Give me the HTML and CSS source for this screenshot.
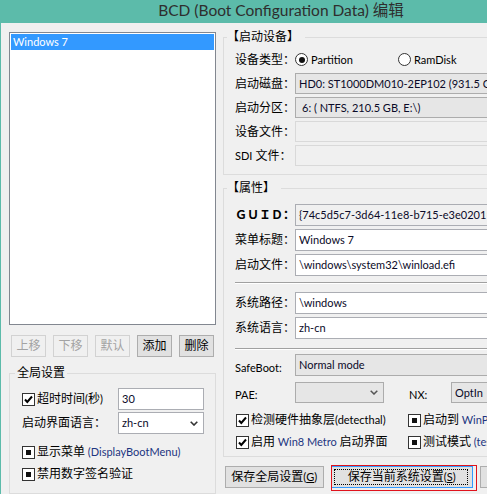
FILE: index.html
```html
<!DOCTYPE html>
<html lang="zh-CN">
<head>
<meta charset="utf-8">
<title>BCD 编辑</title>
<link rel="stylesheet" href="styles.css">
</head>
<body>
<div class="window">
  <div class="titlebar">BCD (Boot Configuration Data) 编辑</div>
  <div class="client">
    <div class="left">
      <div class="listbox">
        <div class="list-item selected">Windows 7</div>
      </div>
      <div class="btnrow">
        <button class="btn small" disabled>上移</button>
        <button class="btn small" disabled>下移</button>
        <button class="btn small" disabled>默认</button>
        <button class="btn small">添加</button>
        <button class="btn small">删除</button>
      </div>
      <fieldset class="group global">
        <legend>全局设置</legend>
        <div class="grow">
          <label class="chk gfirst"><span class="box"><svg viewBox="0 0 11 11" width="11" height="11"><path d="M2 5.5 L4.3 8 L9 2.5" fill="none" stroke="#000" stroke-width="2"/></svg></span>超时时间<span class="lt">(</span>秒<span class="lt">)</span></label>
          <div class="field edit gfield">30</div>
        </div>
        <div class="grow mt2">
          <span class="gfirst">启动界面语言：</span>
          <div class="field edit gfield combo"><span class="ctext">zh-cn</span><svg class="arrow" viewBox="0 0 8 5" width="8" height="5"><path d="M0.7 0.7 L4 4 L7.3 0.7" fill="none" stroke="#333" stroke-width="1.6"/></svg></div>
        </div>
        <label class="chk solo mt8"><span class="box"><span class="ind"></span></span>显示菜单 <span class="lt en">&nbsp;(DisplayBootMenu)</span></label>
        <label class="chk solo mt2"><span class="box"><span class="ind"></span></span>禁用数字签名验证</label>
      </fieldset>
    </div>

    <div class="right">
      <fieldset class="group dev">
        <legend>【启动设备】</legend>
        <div class="frow">
          <span class="flabel">设备类型：</span>
          <label class="radio r1"><span class="rcircle"><span class="rdot"></span></span>Partition</label>
          <label class="radio"><span class="rcircle"></span>RamDisk</label>
        </div>
        <div class="frow">
          <span class="flabel">启动磁盘：</span>
          <div class="field ro-combo">HD0: ST1000DM010-2EP102 (931.5 GB, Partition Table: GPT)</div>
        </div>
        <div class="frow">
          <span class="flabel">启动分区：</span>
          <div class="field ro-combo part">6: ( NTFS, 210.5 GB, E:\)</div>
        </div>
        <div class="frow">
          <span class="flabel">设备文件：</span>
          <div class="field disabled"></div>
        </div>
        <div class="frow">
          <span class="flabel"><span class="lt">SDI</span> 文件：</span>
          <div class="field disabled"></div>
        </div>
      </fieldset>

      <fieldset class="group props">
        <legend>【属性】</legend>
        <div class="prow">
          <span class="flabel guid">ＧＵＩＤ：</span>
          <div class="field readonly">{74c5d5c7-3d64-11e8-b715-e3e020110001}</div>
        </div>
        <div class="prow mt3">
          <span class="flabel">菜单标题：</span>
          <div class="field edit">Windows 7</div>
        </div>
        <div class="prow mt3">
          <span class="flabel">启动文件：</span>
          <div class="field edit">\windows\system32\winload.efi</div>
        </div>
        <div class="sep s1"></div>
        <div class="prow mt8">
          <span class="flabel">系统路径：</span>
          <div class="field edit">\windows</div>
        </div>
        <div class="prow mt3">
          <span class="flabel">系统语言：</span>
          <div class="field edit">zh-cn</div>
        </div>
        <div class="sep s2"></div>
        <div class="prow low mt4">
          <span class="flabel blow">SafeBoot:</span>
          <div class="field ro-combo">Normal mode</div>
        </div>
        <div class="prow low short mt6">
          <span class="flabel blow">PAE:</span>
          <div class="field ro-combo pae"><svg class="arrow" viewBox="0 0 8 5" width="8" height="5"><path d="M0.7 0.7 L4 4 L7.3 0.7" fill="none" stroke="#555" stroke-width="1.5"/></svg></div>
          <span class="nxlabel blow">NX:</span>
          <div class="field ro-combo">OptIn</div>
        </div>
        <div class="crow mt6">
          <label class="chk ccol"><span class="box"><svg viewBox="0 0 11 11" width="11" height="11"><path d="M2 5.5 L4.3 8 L9 2.5" fill="none" stroke="#000" stroke-width="2"/></svg></span>检测硬件抽象层<span class="lt">(detecthal)</span></label>
          <label class="chk"><span class="box"><span class="ind"></span></span>启动到 <span class="lt en">&nbsp;WinPE</span></label>
        </div>
        <div class="crow">
          <label class="chk ccol"><span class="box"><svg viewBox="0 0 11 11" width="11" height="11"><path d="M2 5.5 L4.3 8 L9 2.5" fill="none" stroke="#000" stroke-width="2"/></svg></span>启用<span class="lt en">&nbsp;Win8 Metro&nbsp;</span>启动界面</label>
          <label class="chk"><span class="box"><span class="ind"></span></span>测试模式<span class="lt en">&nbsp;(testsigning)</span></label>
        </div>
      </fieldset>

      <div class="bbtns">
        <button class="btn b1">保存全局设置<span class="lt">(<u>G</u>)</span></button>
        <button class="btn b2">保存当前系统设置<span class="lt">(<u>S</u>)</span></button>
        <button class="btn b3">关闭</button>
      </div>
    </div>
  </div>
</div>
</body>
</html>
```

FILE: styles.css
```css
* { box-sizing: border-box; }
html, body { margin: 0; padding: 0; background: #f0f0f0; }
body {
  width: 487px;
  height: 494px;
  overflow: hidden;
  font-family: "Lato", "Noto Sans CJK SC", sans-serif;
  font-size: 12px;
  line-height: 16px;
  color: #000;
}
.window {
  width: 562px;
  height: 494px;
  background: #f0f0f0;
  display: flex;
  flex-direction: column;
}
.titlebar {
  height: 23px;
  flex: none;
  background: #5cbbaa;
  color: #2e2e2e;
  font-size: 15.5px;
  line-height: 20px;
  text-align: center;
}
.client {
  flex: 1;
  display: flex;
  align-items: flex-start;
  gap: 7px;
  padding: 5px 0 0 8px;
  border-left: 1px solid #5cbbaa;
}
.lt { font-size: 11px; }

/* left column */
.left { width: 207px; flex: none; display: flex; flex-direction: column; }
.listbox {
  margin-top: 4px;
  height: 293px;
  background: #fff;
  border: 1px solid #828790;
  padding: 1px;
}
.list-item { height: 16px; line-height: 16px; padding-left: 2px; font-size: 11px; }
.list-item.selected { background: #3399ff; color: #fff; }

.btnrow { display: flex; gap: 7px; margin: 10px 0 0 2px; }
.btn {
  font: inherit;
  color: #000;
  background: #e1e1e1;
  border: 1px solid #adadad;
  height: 22px;
  padding: 0;
  line-height: 18px;
  border-radius: 0;
}
.btn.small { width: 35px; }
.btn:disabled { color: #a3a3a3; background: #f0f0f0; border-color: #d2d2d2; }

.group { margin: 0; border: 1px solid #dcdcdc; min-width: 0; }
legend { line-height: 16px; }

.group.global { margin-top: 8px; padding: 7px 10px 9px 12px; }
.global legend { margin-left: -7px; padding: 0 2px; }
.grow { display: flex; align-items: center; height: 22px; }
.gfirst { width: 96px; flex: none; }
.gfield { width: 86px; }
.mt2 { margin-top: 2px; }
.mt3 { margin-top: 3px; }
.mt4 { margin-top: 4px; }
.mt6 { margin-top: 6px; }
.mt8 { margin-top: 8px; }

.chk { display: flex; align-items: center; white-space: nowrap; }
.chk.solo { height: 20px; }
.box {
  width: 13px;
  height: 13px;
  flex: none;
  border: 1px solid #333;
  background: #fff;
  margin-right: 2px;
  display: flex;
  align-items: center;
  justify-content: center;
}
.box svg { display: block; }
.ind { width: 5px; height: 5px; background: #111; }
.en { color: #1d3580; }

/* fields */
.field {
  height: 22px;
  border: 1px solid #abadb3;
  background: #fff;
  padding: 0 3px;
  display: flex;
  align-items: center;
  white-space: nowrap;
  overflow: hidden;
  color: #0a0a28;
  font-size: 11px;
}
.combo { justify-content: space-between; }
.combo .arrow { margin-right: 2px; }
.ro-combo { background: #e6e6e6; border-color: #acacac; }
.disabled { background: #f0f0f0; border-color: #d9d9d9; }
.readonly { background: #f0f0f0; border-color: #abadb3; }
.part { padding-left: 6px; }

/* right column */
.right { width: 330px; flex: none; display: flex; flex-direction: column; margin-top: 1px; }
.group.dev { padding: 4px 10px 8px 11px; }
.dev legend, .props legend { margin-left: -8px; padding: 0 6px 0 0; }
.frow { display: flex; align-items: center; height: 21px; margin-top: 3px; }
.frow:first-of-type { margin-top: 0; }
.frow .field { flex: 1; height: 21px; }
.flabel { width: 60px; flex: none; white-space: nowrap; }
.guid { font-weight: bold; }

.radio { display: flex; align-items: center; font-size: 11px; }
.r1 { width: 103px; }
.rcircle {
  width: 13px;
  height: 13px;
  border: 1px solid #333;
  border-radius: 50%;
  background: #fff;
  margin-right: 3px;
  display: flex;
  align-items: center;
  justify-content: center;
}
.rdot { width: 6px; height: 6px; border-radius: 50%; background: #111; }

.group.props { margin-top: 5px; padding: 8px 10px 3px 11px; }
.prow { display: flex; align-items: center; height: 22px; }
.prow .field { flex: 1; }
.prow.low { align-items: stretch; }
.prow.short { height: 21px; }
.blow { align-self: flex-end; line-height: 16px; font-size: 11px; }
.prow.low .field { height: auto; }
.prow.low .flabel { height: 16px; }
.sep { height: 2px; border-top: 1px solid #a0a0a0; border-bottom: 1px solid #fff; }
.s1 { margin-top: 6px; }
.s2 { margin-top: 9px; }
.prow .pae { flex: none; width: 89px; justify-content: flex-end; padding-right: 5px; }
.nxlabel { width: 42px; margin-left: 25px; flex: none; }

.crow { display: flex; align-items: center; height: 22px; }
.ccol { width: 173px; flex: none; padding-left: 1px; }

.bbtns { display: flex; gap: 7px; margin: 9px 0 0 2px; }
.b1 { width: 101px; }
.b2 { width: 146px; position: relative; border-color: #3399ff; }
.b2::before {
  content: "";
  position: absolute;
  left: -1px;
  top: -2px;
  width: 144px;
  height: 24px;
  border: 1px solid #e0121c;
}
.b2::after {
  content: "";
  position: absolute;
  left: 2px;
  top: 2px;
  right: 4px;
  bottom: 2px;
  border: 1px dotted #000;
}
.b3 { width: 75px; }
u { text-decoration: underline; }
```
